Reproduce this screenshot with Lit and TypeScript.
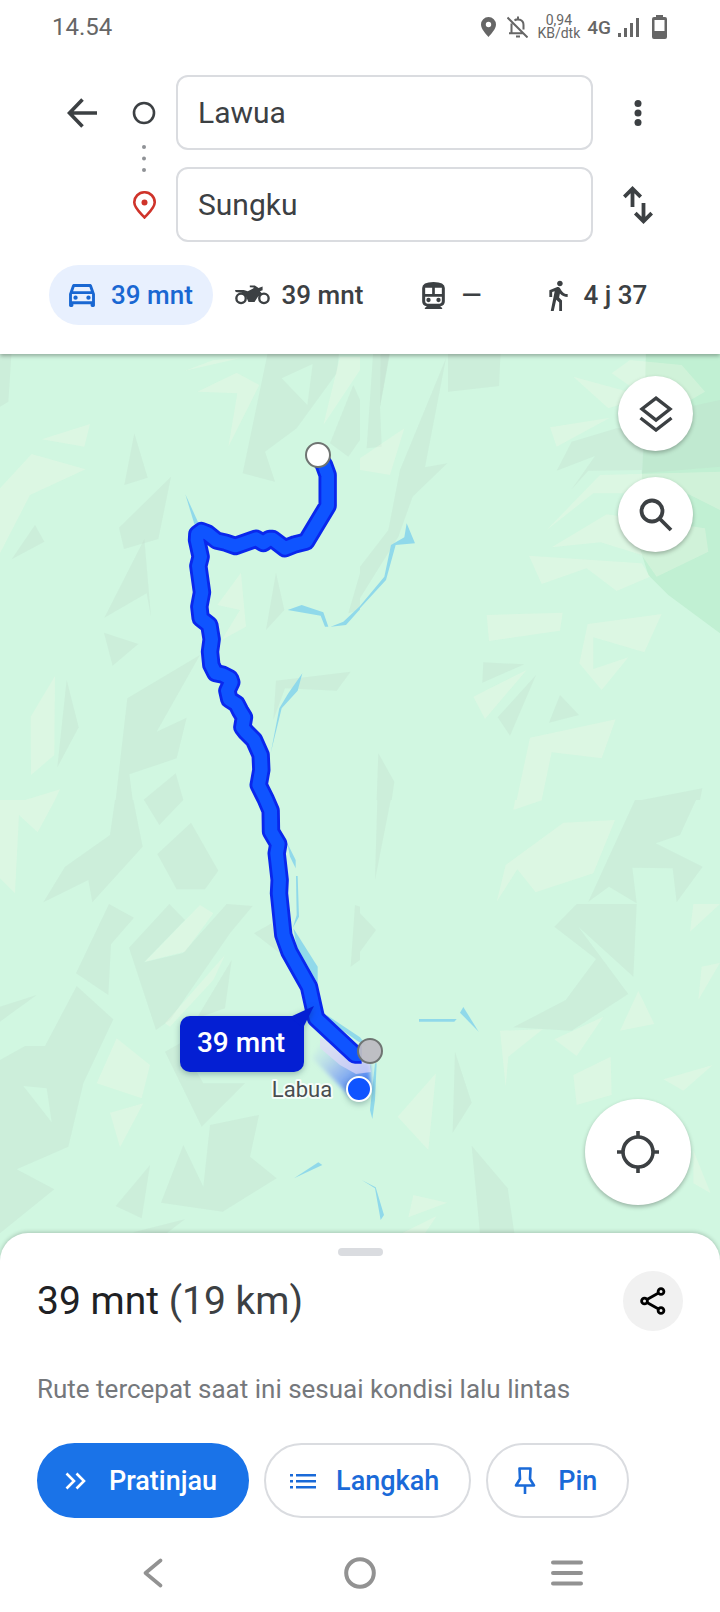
import { LitElement, html, svg, css } from "lit";
import { customElement } from "lit/decorators.js";

type Tile = { x: number; y: number; dark: string[]; light: string[]; water: string[]; land: string[] };

/* Terrain facets, one entry per map tile, at three units to the pixel. */
const TILES: Tile[] = [
  {
    x: 0, y: -12,
    dark: [
      "0,0 35,0 25,155 0,170",
      "805,0 1018,0 1010,70 890,235 795,305 825,395 728,370",
      "1060,105 1080,150 1080,270 1045,320 990,280",
      "403,250 443,383 373,405",
      "513,380 475,567 372,597 357,533",
      "433,567 453,800 440,730 313,803",
      "105,525 133,575 35,628",
      "312,848 415,882 338,947",
      "600,915 470,1145 560,1103 530,1225 388,1273 398,1350 347,1350 382,1045",
      "828,992 1052,965 1010,1022 855,1015 820,1110",
      "828,668 853,780 798,840",
      "200,990 236,1132 172,1252",
      "527,1270 550,1350 430,1350",
      "1080,670 1080,780 1045,790",
    ],
    light: [
      "555,62 640,30 720,25",
      "592,125 710,68 778,105 685,290 712,130",
      "1020,20 1080,20 1080,60 970,225",
      "125,268 270,222 253,290",
      "95,312 257,358 90,435 0,610 0,415",
      "723,668 738,830 665,870 720,780 652,765",
      "165,978 163,1215 93,1275 92,1100",
      "180,1318 165,1350 75,1350",
    ],
    water: [
      "556,433 595,518 583,522",
      "863,780 905,765 970,787 985,830 975,830 962,797",
      "992,830 1030,815 1080,768 1080,778 1038,825",
      "907,970 893,1022 845,1075 812,1210 838,1075 865,1030",
    ],
    land: ["845,85 938,42 922,165"],
  },
  {
    x: 1080, y: -12,
    dark: [
      "40,0 92,0 60,170 65,290 20,295",
      "62,0 90,0 60,170",
      "258,25 195,352 262,340 158,440 115,560 0,745 0,650 85,540 120,360",
      "264,0 422,0 417,108 264,125",
      "635,275 770,235 850,235 845,360 685,362 635,418 705,318 590,362",
      "850,200 1080,150 1080,350 845,370",
      "370,937 493,943 367,998",
      "528,975 450,1157 413,1102",
      "600,1035 657,1095 567,1118",
      "55,1210 103,1295 95,1350 50,1350",
      "1027,1315 1020,1350 845,1350",
    ],
    light: [
      "0,325 133,235 90,375 0,360",
      "640,80 860,140 745,175",
      "755,70 810,30 965,45 1035,125 940,180 870,150",
      "570,232 750,203 590,290",
      "560,540 720,375 1080,365 1080,480 980,430 700,430",
      "575,592 740,493 1035,535 1045,605 890,680 845,615 722,577",
      "507,617 845,640 870,680 770,723 680,655 545,702",
      "380,795 608,788 600,842 387,873",
      "683,822 905,792 853,907 700,862 700,957 805,922 725,1020 658,940",
      "340,1040 500,960 375,1107",
      "510,1163 767,1108 725,1225 575,1207 545,1350 470,1350",
    ],
    water: ["0,768 73,680 93,585 133,562 140,520 165,580 107,585 78,690 0,775"],
    land: [],
  },
  {
    x: 0, y: 1338,
    dark: [
      "345,0 400,0 428,140 277,307 265,240 130,307 195,200 330,105",
      "432,0 550,0 478,75",
      "573,68 655,212 615,268 530,268 472,162",
      "327,312 402,353 333,433 325,585 228,520",
      "508,312 555,360 432,487 548,460 680,312 758,318 690,400 510,660 468,690 387,443",
      "695,480 675,625 590,655",
      "230,558 340,658 250,850 205,1040 50,1108 163,1168 0,1300 0,780 75,738 135,738",
      "110,585 0,665 0,620",
      "495,755 540,730 610,850 735,850 605,980",
      "762,400 815,370 840,460",
      "777,945 750,1070 830,1135 668,1235 483,1208 550,1035 610,1160 630,975",
      "450,1095 425,1255 347,1218",
      "555,1258 500,1300 400,1297",
      "1065,315 1080,320 1080,480 1052,500",
    ],
    light: [
      "0,0 165,0 113,97 57,45 45,280 0,235",
      "600,315 640,340 555,455 435,485",
      "675,465 640,540 510,680 495,670",
      "350,715 450,795 425,895 290,850",
      "430,910 360,1042 330,938",
    ],
    water: [
      "862,130 887,180 887,205 870,170",
      "888,228 893,228 897,350 878,385 890,345",
      "880,385 953,500 953,550 890,440",
      "980,645 1080,712 1080,728 990,665",
      "882,1135 955,1087 967,1095",
    ],
    land: ["70,858 140,865 155,967"],
  },
  {
    x: 1080, y: 1338,
    dark: [
      "52,0 92,0 45,240",
      "0,340 48,390 0,455",
      "825,0 1008,0 960,105 887,130 1028,200 950,307 938,205 817,203 830,310 747,260 685,305",
      "650,312 830,312 820,530 655,380 805,582 635,692 460,682 617,600 708,477 583,380",
      "285,755 335,908 278,998",
      "335,1037 443,1165 463,1300 360,1300",
    ],
    light: [
      "465,0 548,0 460,30",
      "437,195 610,68 765,60 700,220 527,277 472,208 410,305",
      "1000,312 1080,312 990,395",
      "1025,500 1080,488 1015,600",
      "835,573 883,672 780,692",
      "583,718 730,650 650,768",
      "420,692 548,688 445,770 437,860",
      "640,825 752,770 755,885 650,915",
      "228,820 205,1050 113,950",
      "910,838 1058,795 970,872",
      "160,1185 262,1208 145,1252",
      "1000,1050 1052,1180 1000,1150",
      "125,1300 230,1248 195,1300",
    ],
    water: [
      "177,657 290,657 283,665 177,665",
      "310,621 356,695 300,638",
      "0,712 22,740 0,728",
      "45,790 50,790 45,900 37,957 30,930",
      "5,1140 47,1162 72,1245 62,1260 45,1165",
    ],
    land: [],
  },
];

const ROUTE =
  "954,316 972,345 983,375 983,467 918,575 885,583 855,595 818,567 808,567 790,579 768,566 706,588 677,578 650,572 622,550 604,543 592,552 591,570 602,620 595,648 606,727 598,770 602,805 628,825 635,868 630,905 634,945 646,969 668,974 690,985 694,997 682,1022 688,1048 710,1062 720,1082 732,1102 727,1132 738,1146 762,1170 782,1215 784,1260 776,1305 797,1347 812,1382 813,1445 835,1482 830,1510 839,1590 837,1630 850,1755 868,1805 927,1910 948,2005 1065,2114 1085,2114";

const poly = (cls: string) => (points: string) => svg`<polygon class=${cls} points=${points}></polygon>`;

@customElement("route-map")
export class RouteMap extends LitElement {
  static styles = css`
    :host { display: block; position: relative; overflow: hidden; background: #d1f7e1; font-family: Roboto, "Liberation Sans", sans-serif; }
    .canvas { position: absolute; inset: 0; width: 100%; height: 100%; }
    .dark { fill: #bfd9c9; fill-opacity: 0.28; }
    .light { fill: #f4fae8; fill-opacity: 0.3; }
    .land { fill: #d1f7e1; }
    .forest { fill: #c1f0d3; }
    .water { fill: #90d9ea; }
    .route { fill: none; stroke-linejoin: round; }
    .edge { stroke: #0a27ec; stroke-width: 55; }
    .core { stroke: #0f54ff; stroke-width: 38; }
    .bubble { fill: #041fd3; }
    .eta { fill: #fff; font-size: 28px; font-weight: 500; }
    .place { fill: #4a4e50; font-size: 22px; stroke: #fff; stroke-opacity: 0.8; stroke-width: 4px; stroke-linejoin: round; paint-order: stroke; }
    .shade { filter: drop-shadow(0 2px 3px rgba(0, 40, 60, 0.3)); }
    .tools { position: absolute; top: 22px; right: 27px; display: flex; flex-direction: column; gap: 26px; }
    button { display: grid; place-items: center; border: 0; padding: 0; border-radius: 50%; background: #fff; color: #3c4043; box-shadow: 0 2px 4px rgba(0, 0, 0, 0.28); }
    .tool { width: 75px; height: 75px; }
    .locate { position: absolute; right: 29px; bottom: 56px; width: 106px; height: 106px; }
  `;

  render() {
    return html`
      <svg class="canvas" viewBox="0 0 720 907" preserveAspectRatio="xMidYMid slice" role="img" aria-label="Peta rute">
        <defs>
          <linearGradient id="beam" gradientUnits="userSpaceOnUse" x1="359" y1="735" x2="318" y2="690">
            <stop offset="0" stop-color="#1c5cff" stop-opacity="0.75"></stop>
            <stop offset="0.5" stop-color="#7f9cf5" stop-opacity="0.55"></stop>
            <stop offset="1" stop-color="#b4d4f0" stop-opacity="0.1"></stop>
          </linearGradient>
          <filter id="soft" x="-20%" y="-20%" width="140%" height="140%"><feGaussianBlur stdDeviation="2"></feGaussianBlur></filter>
        </defs>
        <g transform="scale(0.33333)">
          <polygon class="forest" points="1938,-12 2160,-12 2160,838 2005,723 1945,663 1915,568 1930,288"></polygon>
          ${TILES.map(
            (t) => svg`<g transform=${`translate(${t.x} ${t.y})`}>
              ${t.dark.map(poly("dark"))}${t.light.map(poly("light"))}${t.land.map(poly("land"))}${t.water.map(poly("water"))}
            </g>`,
          )}
        </g>
        <polygon points="320,690 350,700 370,710 371,736 350,742 312,704" fill="url(#beam)" filter="url(#soft)"></polygon>
        <polygon points="320,684 320,694 340,711 356,720 371,718 368,700 340,690" fill="#e0d8f8" fill-opacity="0.7"></polygon>
        <g transform="scale(0.33333) translate(0 -12)">
          <polyline class="route edge" points=${ROUTE}></polyline>
          <polyline class="route core" points=${ROUTE}></polyline>
        </g>
        <circle cx="318" cy="101" r="12" fill="#fff" stroke="#6f7472" stroke-width="2"></circle>
        <circle cx="370" cy="697" r="12" fill="#bdbcc2" fill-opacity="0.95" stroke="#6f7472" stroke-width="2"></circle>
        <g class="shade">
          <circle cx="359" cy="735" r="12" fill="#0f54ff" stroke="#fff" stroke-width="2"></circle>
        </g>
        <g class="shade">
          <rect class="bubble" x="180" y="662" width="124" height="56" rx="10"></rect>
          <polygon class="bubble" points="290,663 314,652 303,674"></polygon>
        </g>
        <text class="eta" x="241" y="698" text-anchor="middle">39 mnt</text>
        <text class="place" x="302" y="743" text-anchor="middle">Labua</text>
      </svg>
      <div class="tools">
        <button class="tool" aria-label="Lapisan peta">
          <svg width="34" height="36" viewBox="0 0 34 36" fill="none" stroke="currentColor" stroke-width="3.4">
            <path d="M17 2.2 L31 13 L17 24 L3 13 Z M1.5 22 L17 34 L32.500 22"></path>
          </svg>
        </button>
        <button class="tool" aria-label="Telusuri">
          <svg width="34" height="34" viewBox="0 0 34 34" fill="none" stroke="currentColor" stroke-width="3.800">
            <circle cx="13" cy="13" r="10.500"></circle>
            <path d="M20.500 20.500 L32 32"></path>
          </svg>
        </button>
      </div>
      <button class="locate" aria-label="Lokasi saya">
        <svg width="42" height="42" viewBox="0 0 42 42" fill="none" stroke="currentColor" stroke-width="3.600">
          <circle cx="21" cy="21" r="15"></circle>
          <path d="M21 0 V6 M21 36 V42 M0 21 H6 M36 21 H42"></path>
        </svg>
      </button>
    `;
  }
}

@customElement("app-root")
export class AppRoot extends LitElement {
  static styles = css`
    :host { display: flex; flex-direction: column; min-height: 100vh; background: #fff; color: #3c4043; font-family: Roboto, "Liberation Sans", sans-serif; }
    *, *::before, *::after { box-sizing: border-box; }
    button { font: inherit; color: inherit; background: none; border: 0; padding: 0; margin: 0; }
    svg { display: block; flex: none; }

    .status { display: flex; align-items: center; justify-content: space-between; height: 54px; padding: 0 53px 0 52px; color: #666; }
    .clock { font-size: 24px; }
    .tray { display: flex; align-items: center; gap: 7px; }
    .bell { margin: 0 2px 0 4px; }
    .rate { font-size: 14px; line-height: 13px; text-align: center; }
    .net { font-size: 19px; font-weight: 500; }
    .battery { margin-left: 5px; }

    header { position: relative; z-index: 1; background: #fff; box-shadow: 0 2px 4px rgba(0, 0, 0, 0.3); }
    .trip { display: grid; grid-template-columns: 60px 64px 1fr 90px; grid-template-rows: 75px 75px; row-gap: 17px; padding: 21px 37px 0 52px; }
    .icon { display: grid; place-items: center; }
    .marks { grid-column: 2; grid-row: 1 / 3; display: flex; flex-direction: column; align-items: center; justify-content: space-between; padding: 26px 0 23px; }
    .field { grid-column: 3; display: block; }
    .stop { display: block; width: 100%; height: 100%; border: 2px solid #dadce0; border-radius: 12px; padding: 0 20px; background: #fff; color: #3c4043; font: 400 30px Roboto, "Liberation Sans", sans-serif; outline: 0; }
    .modes { display: grid; grid-template-columns: 164fr 172fr 134fr 158fr; padding: 23px 43px 29px 49px; }
    .mode { display: flex; align-items: center; justify-content: center; gap: 16px; height: 60px; border-radius: 30px; font-size: 26px; font-weight: 500; white-space: nowrap; }
    .tight { gap: 12px; }
    .active { background: #e8f0fe; color: #1967d2; }

    route-map { flex: 1; min-height: 480px; }

    .sheet { position: relative; z-index: 1; margin-top: -28px; padding: 15px 37px 0; border-radius: 28px 28px 0 0; background: #fff; box-shadow: 0 -1px 4px rgba(0, 0, 0, 0.2); }
    .handle { width: 45px; height: 8px; margin: 0 auto 15px; border-radius: 4px; background: #dadce0; }
    .summary { display: flex; align-items: center; justify-content: space-between; }
    h1 { margin: 0; font-size: 39px; line-height: 48px; font-weight: 400; color: #202124; }
    .distance { color: #3c4043; }
    .share { display: grid; place-items: center; width: 60px; height: 60px; border-radius: 50%; background: #f1f1f1; color: #000; }
    .note { margin: 42px 0 38px; font-size: 26px; line-height: 32px; color: #75787c; }
    .actions { display: flex; gap: 15px; }
    .action { display: flex; align-items: center; gap: 20px; height: 75px; padding: 0 30px 0 24px; border: 2px solid #dadce0; border-radius: 38px; color: #1a6ad8; font-size: 27px; font-weight: 500; }
    .primary { border-color: #1a73e8; background: #1a73e8; color: #fff; }

    .system { position: relative; z-index: 2; display: grid; grid-template-columns: repeat(3, 1fr); justify-items: center; align-items: center; height: 94px; padding: 16px 50px 0; background: #fff; color: #929292; }
  `;

  render() {
    return html`
      <header>
        <div class="status">
          <span class="clock">14.54</span>
          <div class="tray">
            <svg width="15" height="20" viewBox="0 0 15 20" fill="currentColor">
              <path fill-rule="evenodd" d="M7.500 0 A7.500 7.500 0 0 1 15 7.500 C15 12 10 17 7.500 20 C5 17 0 12 0 7.500 A7.500 7.500 0 0 1 7.500 0 Z M7.500 4.800 A2.700 2.700 0 1 0 7.500 10.200 A2.700 2.700 0 1 0 7.500 4.800 Z"></path>
            </svg>
            <svg class="bell" width="21" height="22" viewBox="0 0 21 22" fill="none" stroke="currentColor" stroke-width="2">
              <path d="M0.500 1.500 L20.500 21.500 M4.500 7.500 V16.500 M2 17.200 H16 M7.500 4.500 C10 2.500 16.500 3 16.500 9 V13.500 M11 0.500 V3.500 M9 20.500 H13"></path>
            </svg>
            <div class="rate">0,94<br />KB/dtk</div>
            <span class="net">4G</span>
            <svg width="22" height="20" viewBox="0 0 22 20" fill="currentColor">
              <path d="M0 16 H3 V20 H0 Z M6 11 H9 V20 H6 Z M12 6 H15 V20 H12 Z M18 1 H21 V20 H18 Z"></path>
            </svg>
            <svg class="battery" width="15" height="24" viewBox="0 0 15 24" fill="currentColor">
              <path fill-rule="evenodd" d="M4 0 H11 V2 H13 Q15 2 15 4 V22 Q15 24 13 24 H2 Q0 24 0 22 V4 Q0 2 2 2 H4 Z M2.500 5 V16 H12.500 V5 Z"></path>
            </svg>
          </div>
        </div>

        <div class="trip">
          <button class="icon" aria-label="Kembali">
            <svg width="30" height="30" viewBox="0 0 30 30" fill="none" stroke="currentColor" stroke-width="3.600">
              <path d="M30 15 H3 M15.500 1.500 L2.500 15 L15.500 28.500"></path>
            </svg>
          </button>
          <div class="marks">
            <svg width="24" height="24" viewBox="0 0 24 24" fill="none" stroke="currentColor" stroke-width="2.600"><circle cx="12" cy="12" r="10"></circle></svg>
            <svg width="4" height="27" viewBox="0 0 4 27" fill="#8f9296"><circle cx="2" cy="2" r="2"></circle><circle cx="2" cy="13.500" r="2"></circle><circle cx="2" cy="25" r="2"></circle></svg>
            <svg width="23" height="28" viewBox="0 0 23 28" fill="none" stroke="#cf332a" stroke-width="2.600">
              <path d="M11.500 1.300 A10 10 0 0 1 21.700 11.500 C21.700 17 15 22.500 11.500 26.500 C8 22.500 1.300 17 1.300 11.500 A10 10 0 0 1 11.500 1.300 Z"></path>
              <circle cx="11.500" cy="11.500" r="3" fill="#cf332a" stroke="none"></circle>
            </svg>
          </div>
          <label class="field"><input class="stop" type="text" aria-label="Asal" value="Lawua" /></label>
          <button class="icon" aria-label="Opsi lainnya">
            <svg width="8" height="26" viewBox="0 0 8 26" fill="currentColor"><circle cx="4" cy="3.500" r="3.500"></circle><circle cx="4" cy="13" r="3.500"></circle><circle cx="4" cy="22.500" r="3.500"></circle></svg>
          </button>
          <label class="field"><input class="stop" type="text" aria-label="Tujuan" value="Sungku" /></label>
          <button class="icon" aria-label="Tukar asal dan tujuan">
            <svg width="30" height="38" viewBox="0 0 30 38" fill="none" stroke="currentColor" stroke-width="3.800">
              <path d="M9.500 21 V3 M1.300 10.800 L9.500 2.700 L17.700 10.800 M20.500 17 V35 M12.300 27.200 L20.500 35.300 L28.700 27.200"></path>
            </svg>
          </button>
        </div>

        <nav class="modes" aria-label="Moda perjalanan">
          <button class="mode active" aria-pressed="true">
            <svg width="26" height="23" viewBox="3 5 18 16" fill="currentColor">
              <path d="M18.920 6.010C18.720 5.420 18.160 5 17.500 5h-11c-.66 0-1.210.42-1.420 1.010L3 12v8c0 .55.45 1 1 1h1c.55 0 1-.45 1-1v-1h12v1c0 .55.45 1 1 1h1c.55 0 1-.45 1-1v-8l-2.080-5.990zM6.850 7h10.290l1.040 3H5.810l1.040-3zM19 17H5v-5h14v5z"></path>
              <circle cx="7.500" cy="14.500" r="1.500"></circle><circle cx="16.500" cy="14.500" r="1.500"></circle>
            </svg>
            39 mnt
          </button>
          <button class="mode tight" aria-pressed="false">
            <svg width="35" height="20" viewBox="710 352 104 58" fill="currentColor">
              <circle cx="728" cy="391" r="14" fill="none" stroke="currentColor" stroke-width="7"></circle>
              <circle cx="796" cy="391" r="14" fill="none" stroke="currentColor" stroke-width="7"></circle>
              <path d="M710 366 H736 L748 370 L764 362 L766 359 L754 358 V353 H769 L780 360 L792 356 V367 L784 370 L792 378 L778 386 L768 402 H750 L743 386 L730 374 L712 372 Z"></path>
            </svg>
            39 mnt
          </button>
          <button class="mode" aria-pressed="false">
            <svg width="23" height="27" viewBox="0 0 68 81" fill="currentColor">
              <path fill-rule="evenodd" d="M0 18 Q0 0 34 0 Q68 0 68 18 V58 Q68 72 54 73 L60 78 V81 H8 V78 L14 73 Q0 72 0 58 Z M9 17 V36 H30 V17 Z M38 17 V36 H59 V17 Z M9 44 V58 Q9 65 16 65 H52 Q59 65 59 58 V44 Z"></path>
              <circle cx="19" cy="54" r="6.500"></circle><circle cx="49" cy="54" r="6.500"></circle>
            </svg>
            —
          </button>
          <button class="mode" aria-pressed="false">
            <svg width="19" height="31" viewBox="6 1 13 22" fill="currentColor">
              <path d="M13.500 5.500c1.100 0 2-.9 2-2s-.9-2-2-2-2 .9-2 2 .9 2 2 2zM9.800 8.900L7 23h2.100l1.800-8 2.100 2v6h2v-7.500l-2.100-2 .6-3C14.800 12 16.800 13 19 13v-2c-1.900 0-3.500-1-4.300-2.400l-1-1.600c-.4-.6-1-1-1.700-1-.3 0-.5.100-.8.100L6 8.300V13h2V9.600l1.800-.7"></path>
            </svg>
            4 j 37
          </button>
        </nav>
      </header>

      <route-map></route-map>

      <section class="sheet">
        <div class="handle"></div>
        <div class="summary">
          <h1>39 mnt <span class="distance">(19 km)</span></h1>
          <button class="share" aria-label="Bagikan">
            <svg width="26" height="28" viewBox="0 0 26 28" fill="none" stroke="currentColor" stroke-width="2.800">
              <circle cx="4.500" cy="14" r="2.900"></circle><circle cx="21" cy="4.500" r="2.900"></circle><circle cx="21" cy="23.500" r="2.900"></circle>
              <path d="M7 12.500 L18.500 6 M7 15.500 L18.500 22"></path>
            </svg>
          </button>
        </div>
        <p class="note">Rute tercepat saat ini sesuai kondisi lalu lintas</p>
        <div class="actions">
          <button class="action primary">
            <svg width="26" height="26" viewBox="0 0 26 26" fill="none" stroke="currentColor" stroke-width="2.600">
              <path d="M3.500 5.500 L11 13 L3.500 20.500 M13.500 5.500 L21 13 L13.500 20.500"></path>
            </svg>
            Pratinjau
          </button>
          <button class="action">
            <svg width="26" height="26" viewBox="0 0 26 26" fill="currentColor">
              <path d="M0 6 H3 V8.500 H0 Z M0 12 H3 V14.500 H0 Z M0 18 H3 V20.500 H0 Z M6 6 H26 V8.500 H6 Z M6 12 H26 V14.500 H6 Z M6 18 H26 V20.500 H6 Z"></path>
            </svg>
            Langkah
          </button>
          <button class="action">
            <svg width="26" height="28" viewBox="0 0 26 28" fill="none" stroke="currentColor" stroke-width="2.600">
              <path d="M7.500 1.500 H18.500 L18 12 L22 18.500 H4 L8 12 Z M13 19 V27" stroke-linejoin="round"></path>
            </svg>
            Pin
          </button>
        </div>
      </section>

      <nav class="system" aria-label="Navigasi sistem">
        <button aria-label="Kembali ke layar sebelumnya">
          <svg width="20" height="30" viewBox="0 0 20 30" fill="none" stroke="currentColor" stroke-width="3.600" stroke-linecap="round" stroke-linejoin="round"><path d="M17.500 2.500 L2.500 15 L17.500 27.500"></path></svg>
        </button>
        <button aria-label="Layar utama">
          <svg width="32" height="32" viewBox="0 0 32 32" fill="none" stroke="currentColor" stroke-width="4"><circle cx="16" cy="16" r="13.800"></circle></svg>
        </button>
        <button aria-label="Aplikasi terbaru">
          <svg width="32" height="26" viewBox="0 0 32 26" fill="none" stroke="currentColor" stroke-width="4" stroke-linecap="round"><path d="M2 2.500 H30 M2 13 H30 M2 23.500 H30"></path></svg>
        </button>
      </nav>
    `;
  }
}
